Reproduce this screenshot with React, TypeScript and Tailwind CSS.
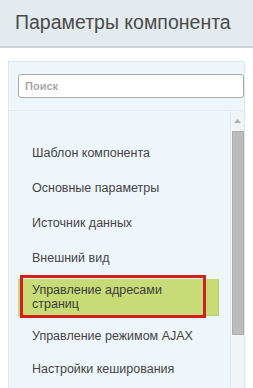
import React from "react";

const items = [
  "Шаблон компонента",
  "Основные параметры",
  "Источник данных",
  "Внешний вид",
];

export default function App() {
  return (
    <div className="w-[253px] h-[388px] overflow-hidden bg-white" style={{ fontFamily: '"Liberation Sans", Arial, sans-serif' }}>
      <div className="h-[48px] bg-[#e4ebee] border-b-2 border-[#cdd4d7] flex items-center pl-[15px]">
        <span className="text-[19.5px] text-[#4a4a4a] leading-none">Параметры компонента</span>
      </div>
      <div className="ml-[8px] mr-[8px] mt-[13px] h-[400px] border border-[#dde6eb] bg-[#eff6fb] flex flex-col">
        <div className="pl-[9px] pr-0 pt-[12px] pb-[12px] border-b border-[#e3ebf0]">
          <div className="h-[24px] bg-white border border-[#a9a9a9] rounded-[3px] flex items-center pl-[6px]">
            <span className="text-[11px] font-bold text-[#a8a8a8]">Поиск</span>
          </div>
        </div>
        <div className="flex flex-1">
          <div className="flex-1 flex flex-col pt-[25px]">
            {items.map((t) => (
              <div key={t} className="h-[35px] pl-[23px] flex items-center text-[12.5px] text-[#444]">
                {t}
              </div>
            ))}
            <div className="relative ml-[9px] mr-[11px] mt-[3px] h-[37px] bg-[#c9db76] border-r border-b border-[#b9cb6a] pl-[14px] flex flex-col justify-center text-[12.5px] text-[#3b3b3b] leading-[14px]">
              <span>Управление адресами</span>
              <span>страниц</span>
              <div className="absolute left-[2px] top-[-4px] w-[186px] h-[43px] border-[3px] border-[#d11e1e]" />
            </div>
            <div className="h-[34px] mt-[3px] pl-[23px] flex items-center text-[12.5px] text-[#444]">
              Управление режимом AJAX
            </div>
            <div className="h-[32px] pl-[23px] flex items-center text-[12.5px] text-[#444]">
              Настройки кеширования
            </div>
          </div>
          <div className="w-[14px] bg-[#f1f4f6] border-l border-[#e6ebee] flex flex-col items-center">
            <div className="h-[20px] flex items-center justify-center">
              <svg width="7" height="4" viewBox="0 0 7 4"><path d="M0 4 L3.5 0 L7 4 Z" fill="#a8b0b5" /></svg>
            </div>
            <div className="w-[12px] h-[204px] bg-[#bcbcbc] border border-[#aeaeae]" />
          </div>
        </div>
      </div>
    </div>
  );
}
